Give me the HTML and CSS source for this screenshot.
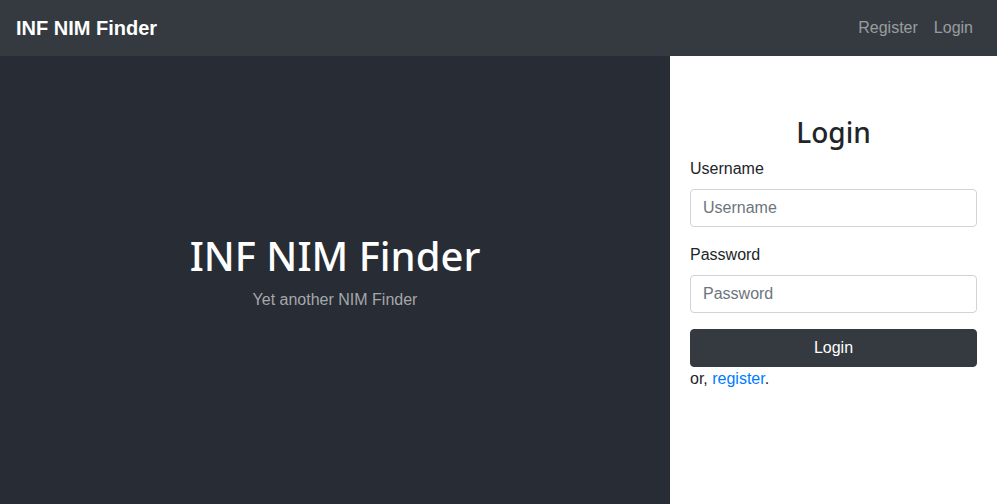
FILE: index.html
```html
<!DOCTYPE html>
<html lang="en">
<head>
<meta charset="utf-8">
<title>INF NIM Finder</title>
<link rel="stylesheet" href="styles.css">
</head>
<body>
<nav class="navbar">
  <a class="brand" href="#">INF NIM Finder</a>
  <div class="nav-links">
    <a class="nav-link" href="#">Register</a>
    <a class="nav-link" href="#">Login</a>
  </div>
</nav>
<main class="main">
  <section class="hero">
    <h1 class="hero-title">INF NIM Finder</h1>
    <p class="hero-sub">Yet another NIM Finder</p>
  </section>
  <section class="panel">
    <h2 class="panel-title">Login</h2>
    <form class="form">
      <div class="form-group">
        <label class="label" for="u">Username</label>
        <input class="input" id="u" type="text" placeholder="Username">
      </div>
      <div class="form-group">
        <label class="label" for="p">Password</label>
        <input class="input" id="p" type="password" placeholder="Password">
      </div>
      <button class="btn" type="button">Login</button>
    </form>
    <p class="alt">or, <a class="link" href="#">register</a>.</p>
  </section>
</main>
</body>
</html>
```

FILE: styles.css
```css
* { box-sizing: border-box; }
html, body { margin: 0; height: 100%; }
body {
  font-family: "Liberation Sans", Arial, sans-serif;
  font-size: 16px;
  line-height: 1.5;
  color: #212529;
  background: #fff;
  display: flex;
  flex-direction: column;
  overflow: hidden;
}
.navbar {
  height: 56px;
  flex: none;
  background: #343a40;
  display: flex;
  align-items: center;
  justify-content: space-between;
  padding: 0 16px;
}
.brand {
  color: #fff;
  font-weight: bold;
  font-size: 20px;
  text-decoration: none;
}
.nav-links { display: flex; }
.nav-link {
  color: rgba(255,255,255,.5);
  text-decoration: none;
  padding: 8px 8px;
}
.main { flex: 1; display: flex; min-height: 0; }
.hero {
  width: 670px;
  flex: none;
  background: #282c34;
  display: flex;
  flex-direction: column;
  align-items: center;
  justify-content: center;
}
.hero-title {
  font-family: "Noto Sans", sans-serif;
  font-weight: 500;
  font-size: 40px;
  line-height: 1.2;
  color: #fff;
  margin: 0 0 8px;
}
.hero-sub {
  margin: 0 0 16px;
  color: #a5a7ab;
}
.panel {
  flex: 1;
  padding: 60px 20px 0;
}
.panel-title {
  font-family: "Noto Sans", sans-serif;
  font-weight: 500;
  font-size: 28px;
  line-height: 1.2;
  text-align: center;
  margin: 0 0 7px;
}
.form-group { margin-bottom: 16px; }
.label { display: block; margin-bottom: 8px; }
.input {
  display: block;
  width: 100%;
  height: 38px;
  padding: 6px 12px;
  font: inherit;
  color: #495057;
  border: 1px solid #ced4da;
  border-radius: 4px;
  background: #fff;
}
.input::placeholder { color: #6c757d; }
.btn {
  display: block;
  width: 100%;
  height: 38px;
  font: inherit;
  color: #fff;
  background: #343a40;
  border: 1px solid #343a40;
  border-radius: 4px;
}
.alt { margin: 0; }
.link { color: #007bff; text-decoration: none; }
```
